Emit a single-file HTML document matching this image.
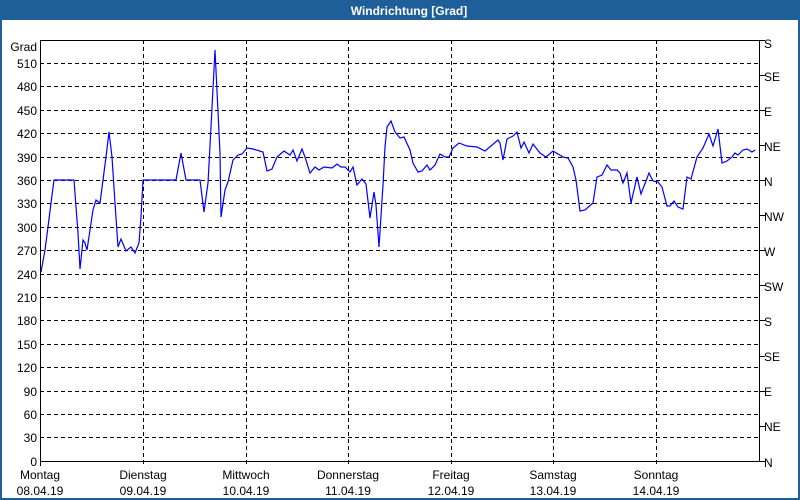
<!DOCTYPE html>
<html><head><meta charset="utf-8"><style>
html,body{margin:0;padding:0;width:800px;height:500px;overflow:hidden;background:#fff}
svg{display:block}
text{font-family:"Liberation Sans","DejaVu Sans",sans-serif;font-size:12px;fill:#000}
</style></head><body>
<svg width="800" height="500" xmlns="http://www.w3.org/2000/svg">
<rect x="0" y="0" width="800" height="500" fill="#1f5f99"/>
<rect x="2" y="20" width="796" height="478" fill="#fff"/>
<text x="409" y="15" text-anchor="middle" style="font-weight:bold;fill:#fff;font-size:12px">Windrichtung [Grad]</text>
<g stroke="#000" stroke-width="1" stroke-dasharray="4,3" fill="none" shape-rendering="crispEdges">
<line x1="40" y1="63.5" x2="760" y2="63.5"/>
<line x1="40" y1="86.5" x2="760" y2="86.5"/>
<line x1="40" y1="110.5" x2="760" y2="110.5"/>
<line x1="40" y1="133.5" x2="760" y2="133.5"/>
<line x1="40" y1="157.5" x2="760" y2="157.5"/>
<line x1="40" y1="180.5" x2="760" y2="180.5"/>
<line x1="40" y1="203.5" x2="760" y2="203.5"/>
<line x1="40" y1="227.5" x2="760" y2="227.5"/>
<line x1="40" y1="250.5" x2="760" y2="250.5"/>
<line x1="40" y1="274.5" x2="760" y2="274.5"/>
<line x1="40" y1="297.5" x2="760" y2="297.5"/>
<line x1="40" y1="320.5" x2="760" y2="320.5"/>
<line x1="40" y1="344.5" x2="760" y2="344.5"/>
<line x1="40" y1="367.5" x2="760" y2="367.5"/>
<line x1="40" y1="391.5" x2="760" y2="391.5"/>
<line x1="40" y1="414.5" x2="760" y2="414.5"/>
<line x1="40" y1="437.5" x2="760" y2="437.5"/>
<line x1="143.5" y1="40" x2="143.5" y2="466"/>
<line x1="246.5" y1="40" x2="246.5" y2="466"/>
<line x1="348.5" y1="40" x2="348.5" y2="466"/>
<line x1="451.5" y1="40" x2="451.5" y2="466"/>
<line x1="553.5" y1="40" x2="553.5" y2="466"/>
<line x1="656.5" y1="40" x2="656.5" y2="466"/>
</g>
<g stroke="#000" stroke-width="1" fill="none" shape-rendering="crispEdges">
<rect x="40.5" y="40.5" width="719" height="421"/>
<line x1="40.5" y1="461" x2="40.5" y2="466"/>
<line x1="760" y1="40.5" x2="765" y2="40.5"/>
<line x1="760" y1="75.5" x2="765" y2="75.5"/>
<line x1="760" y1="110.5" x2="765" y2="110.5"/>
<line x1="760" y1="145.5" x2="765" y2="145.5"/>
<line x1="760" y1="180.5" x2="765" y2="180.5"/>
<line x1="760" y1="215.5" x2="765" y2="215.5"/>
<line x1="760" y1="250.5" x2="765" y2="250.5"/>
<line x1="760" y1="285.5" x2="765" y2="285.5"/>
<line x1="760" y1="320.5" x2="765" y2="320.5"/>
<line x1="760" y1="356.5" x2="765" y2="356.5"/>
<line x1="760" y1="391.5" x2="765" y2="391.5"/>
<line x1="760" y1="426.5" x2="765" y2="426.5"/>
<line x1="760" y1="461.5" x2="765" y2="461.5"/>
</g>
<g text-anchor="end">
<text x="37" y="51">Grad</text>
<text x="37" y="68">510</text><text x="37" y="91">480</text><text x="37" y="115">450</text>
<text x="37" y="138">420</text><text x="37" y="162">390</text><text x="37" y="185">360</text>
<text x="37" y="208">330</text><text x="37" y="232">300</text><text x="37" y="255">270</text>
<text x="37" y="279">240</text><text x="37" y="302">210</text><text x="37" y="325">180</text>
<text x="37" y="349">150</text><text x="37" y="372">120</text><text x="37" y="396">90</text>
<text x="37" y="419">60</text><text x="37" y="442">30</text><text x="37" y="466">0</text>
</g>
<g>
<text x="764" y="48">S</text><text x="764" y="81">SE</text><text x="764" y="116">E</text>
<text x="764" y="151">NE</text><text x="764" y="186">N</text><text x="764" y="221">NW</text>
<text x="764" y="256">W</text><text x="764" y="291">SW</text><text x="764" y="326">S</text>
<text x="764" y="361">SE</text><text x="764" y="396">E</text><text x="764" y="431">NE</text>
<text x="764" y="467">N</text>
</g>
<g text-anchor="middle">
<text x="40" y="479">Montag</text><text x="40" y="495">08.04.19</text>
<text x="143" y="479">Dienstag</text><text x="143" y="495">09.04.19</text>
<text x="246" y="479">Mittwoch</text><text x="246" y="495">10.04.19</text>
<text x="348" y="479">Donnerstag</text><text x="348" y="495">11.04.19</text>
<text x="451" y="479">Freitag</text><text x="451" y="495">12.04.19</text>
<text x="553" y="479">Samstag</text><text x="553" y="495">13.04.19</text>
<text x="656" y="479">Sonntag</text><text x="656" y="495">14.04.19</text>
</g>
<polyline fill="none" stroke="#0000ff" stroke-width="1.2" points="
41,272 45,250 48,227 51,203 54,180 74,180 76,207 78,233 80,269 83,240 85,243 87,250 90,230 93,210 96,200 100,203 103,180 106,157 109,132 112,157 115,203 118,247 121,239 126,251 131,247 135,253 139,243 141,217 143,180 176,180 181,153 186,180 200,180 204,212 208,183 211,127 215,50 220,153 221,217 225,190 228,182
233,160 238,155 242,154 247,148 253,149 263,152 267,171 272,169 277,157 284,151 290,155 293,150 297,161 302,149 305,157 310,173 315,167 319,170 324,167 332,168 337,164 341,167 345,167 350,172 353,167 357,185 362,179 366,184 370,218 374,192 376,205 379,247 383,185 385,147 387,127 391,121 395,132 400,138 404,137
410,150 413,163 418,172 422,171 427,165 430,170 435,165 440,154 445,157 449,157 453,148 459,143 467,146 477,147 485,151 498,140 500,143 503,160 507,139 513,136 517,132 521,148 524,142 529,153 533,144 540,153 546,157 553,151 563,157 568,158 573,167 576,180 580,211 585,210 593,203 597,177 602,175 607,165 611,170 617,170 620,173 623,183 627,173 631,203 637,177 641,194 649,173 653,181 658,182 662,187 667,206 670,206 674,201 678,207 683,209 687,177 691,179 697,157 703,148 709,134 713,146 718,129 722,163 727,161 732,157 735,153 738,155 743,150 747,149 752,152 755,150"/>
</svg>
</body></html>
